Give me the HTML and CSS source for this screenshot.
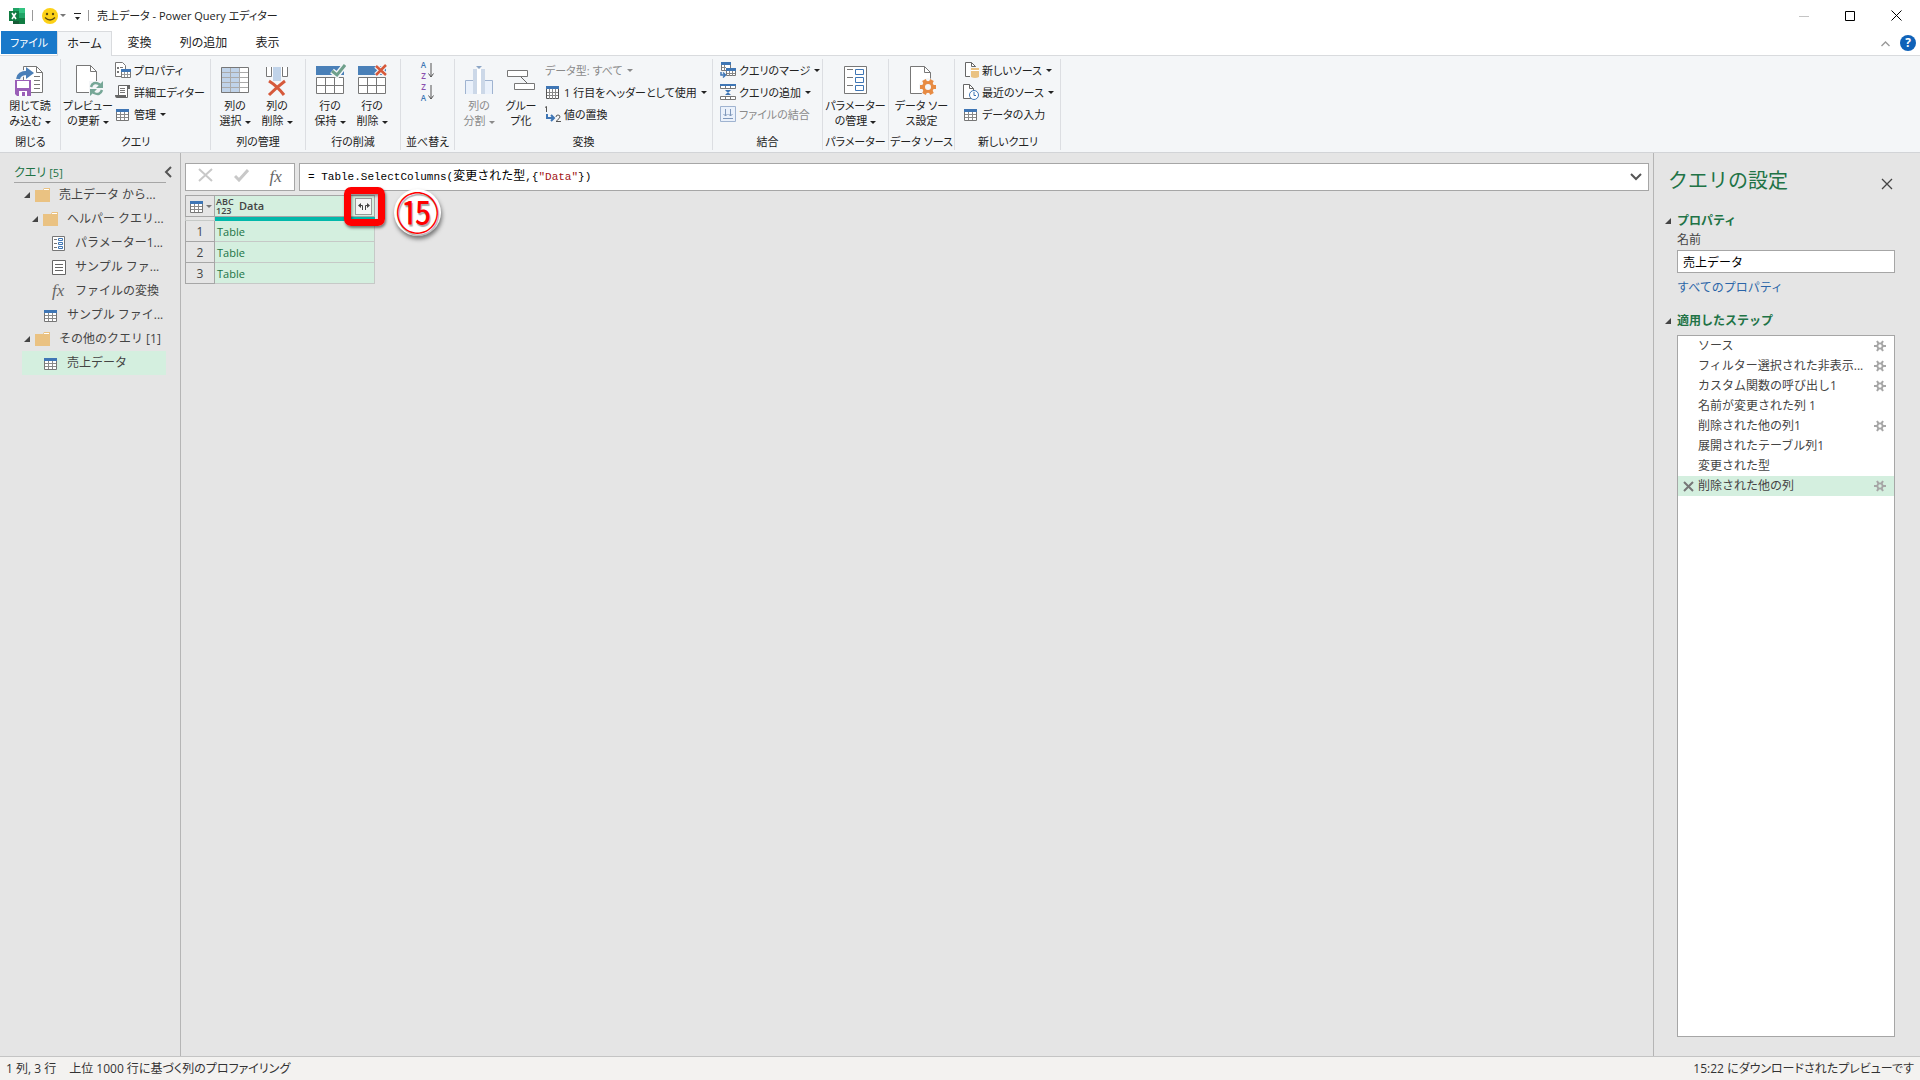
FILE: index.html
```
<!DOCTYPE html>
<html lang="ja">
<head>
    <meta charset="UTF-8">
    <meta name="viewport" content="width=device-width, initial-scale=1.0">
    <title>売上データ - Power Query エディター</title>
    <link rel="stylesheet" href="styles.css">
</head>
<body>
    <!-- shared icons -->
    <svg class="defs" aria-hidden="true">
        <symbol id="i-table" viewBox="0 0 14 13">
            <path fill="#fff" stroke="#767676" d="M.5 3.5h12v9H.5z"/>
            <path fill="none" stroke="#8a8a8a" d="M1 6.5h11M1 9.5h11M4.5 4v8M8.5 4v8"/>
            <path fill="#3f76b5" d="M0 1h13v3H0z"/>
        </symbol>
        <symbol id="i-folder" viewBox="0 0 16 14">
            <path fill="#eac282" d="M0 2h8l1-2h6v2h0v12H0z"/>
            <path fill="#fff" d="M9 1h5v1H9z"/>
        </symbol>
        <symbol id="i-param" viewBox="0 0 14 15">
            <path fill="#fff" stroke="#767676" d="M.5.5h12v14H.5z"/>
            <path fill="none" stroke="#767676" d="M2 3.5h3M2 7.5h3M2 11.5h3"/>
            <path fill="#fff" stroke="#3f76b5" d="M6.5 2.5h4v2h-4zM6.5 6.5h4v2h-4zM6.5 10.5h4v2h-4z"/>
        </symbol>
        <symbol id="i-list" viewBox="0 0 14 15">
            <path fill="#fff" stroke="#666" d="M.5.5h13v14H.5z"/>
            <path fill="none" stroke="#666" d="M3 4.5h8M3 7.5h8M3 10.5h8"/>
        </symbol>
        <symbol id="i-open" viewBox="0 0 6 6"><path fill="#444" d="M6 0v6H0z"/></symbol>
        <symbol id="i-x" viewBox="0 0 12 12"><path fill="none" stroke="currentColor" stroke-width="1.3" d="M1 1l10 10M11 1L1 11"/></symbol>
        <symbol id="i-gear" viewBox="0 0 12 12">
            <circle cx="6" cy="6" r="2.6" fill="none" stroke="#a6a6a6" stroke-width="1.8"/>
            <path fill="none" stroke="#a6a6a6" stroke-width="2" d="M0 6h3M9 6h3M3 1l1.5 2.6M9 1L7.5 3.6M3 11l1.5-2.6M9 11L7.5 8.4"/>
        </symbol>
    </svg>

    <header class="titlebar">
        <svg class="excel" width="16" height="16" viewBox="0 0 16 16">
            <path fill="#185c37" d="M4 0h12v16H4z"/>
            <path fill="#21a366" d="M4 0h6v5H4z"/><path fill="#33c481" d="M10 0h6v5h-6z"/>
            <path fill="#107c41" d="M4 5h6v5H4zM10 10h6v6h-6z"/><path fill="#21a366" d="M10 5h6v5h-6z"/>
            <path fill="#107c41" d="M0 3h10v10H0z"/>
            <path fill="none" stroke="#fff" stroke-width="1.6" d="M3 5l4 6M7 5l-4 6"/>
        </svg>
        <span class="bar"></span>
        <svg class="smile" width="16" height="16" viewBox="0 0 16 16">
            <circle cx="8" cy="8" r="8" fill="#fcd116"/>
            <circle cx="5" cy="6" r="1.2" fill="#5a4a12"/><circle cx="11" cy="6" r="1.2" fill="#5a4a12"/>
            <path fill="none" stroke="#5a4a12" stroke-width="1.3" d="M3 9.5q5 5 10 0"/>
        </svg>
        <span class="caret gray"></span>
        <svg class="qat" width="7" height="8" viewBox="0 0 7 8"><path fill="#222" d="M0 0h7v1H0zM1 4h5L3.500 7z"/></svg>
        <span class="bar"></span>
        <h1 class="title">売上データ - Power Query エディター</h1>
        <div class="window-buttons">
            <button aria-label="最小化"><svg width="10" height="10"><path stroke="#c4c4c4" d="M0 5.500h10"/></svg></button>
            <button aria-label="最大化"><svg width="10" height="10"><path fill="none" stroke="#000" d="M.5.5h9v9h-9z"/></svg></button>
            <button aria-label="閉じる"><svg width="11" height="11"><path fill="none" stroke="#000" d="M.5.5l10 10M10.500.5l-10 10"/></svg></button>
        </div>
    </header>

    <nav class="tabs">
        <button class="tab file">ファイル</button>
        <button class="tab active">ホーム</button>
        <button class="tab">変換</button>
        <button class="tab wide">列の追加</button>
        <button class="tab">表示</button>
        <div class="tabs-right">
            <button aria-label="リボンを折りたたむ"><svg width="9" height="6"><path fill="none" stroke="#999" stroke-width="1.400" d="M.5 5l4-4 4 4"/></svg></button>
            <button class="help" aria-label="ヘルプ">?</button>
        </div>
    </nav>

    <section class="ribbon">
        <div class="group g-close">
            <div class="group-body">
                <button class="large">
                    <svg width="32" height="34" viewBox="0 0 32 34">
                        <path fill="#fff" stroke="#777" d="M9.500 3.500h13l6 6v20h-19z"/><path fill="none" stroke="#777" d="M22.500 3.500v6h6M20 13.500h6M20 17.500h6M20 21.500h6M20 25.500h6"/>
                        <path fill="none" stroke="#f4f6f8" stroke-width="6" d="M4 16q1-7 12-6"/>
                        <path fill="none" stroke="#4a7fb8" stroke-width="4" d="M4 16q1-7 12-6"/><path fill="#4a7fb8" d="M12 4l8 6-8 6z"/>
                        <path fill="#9a5fb8" d="M1 17h16v16H3l-2-2z"/><path fill="#fff" d="M3 18h12v7H3zM5 28h8v5H5z"/><path fill="#9a5fb8" d="M8 29h3v4H8z"/>
                    </svg>
                    閉じて読<br>み込む<span class="caret"></span>
                </button>
            </div>
            <div class="group-label">閉じる</div>
        </div>

        <div class="group g-query">
            <div class="group-body">
                <button class="large">
                    <svg width="32" height="34" viewBox="0 0 32 34">
                        <path fill="#fff" stroke="#777" d="M4.500 2.500h14l6 6v21h-20z"/><path fill="none" stroke="#777" d="M18.500 2.500v6h6"/>
                        <path fill="#f4f6f8" d="M17 18h15v15H17z"/>
                        <path fill="none" stroke="#76a797" stroke-width="2.500" d="M19 24q2-6 8-3l2 2M30 27q-2 6-8 3l-2-2"/>
                        <path fill="#76a797" d="M31 18v7h-7zM18 33v-7h7z"/>
                    </svg>
                    プレビュー<br>の更新<span class="caret"></span>
                </button>
                <div class="stack">
                    <button class="small">
                        <svg width="16" height="16" viewBox="0 0 16 16"><path fill="#fff" stroke="#777" d="M.5.5h7l3 3v11H.5z"/><path fill="#777" d="M2 5h2v2H2zM2 9h2v2H2zM5 5h3v1H5z"/><path fill="#fff" stroke="#777" d="M6.500 7.500h9v8h-9z"/><path stroke="#999" d="M7 12.500h8M9.500 10v5M12.500 10v5"/><path fill="#3f76b5" d="M6 7h10v3H6z"/></svg>
                        プロパティ
                    </button>
                    <button class="small">
                        <svg width="16" height="16" viewBox="0 0 16 16"><path fill="#fff" stroke="#666" d="M3.500 12V1.500h11v3h-2v9h-9"/><path fill="#666" d="M12 1h3v4h-3zM0 11h11v3H2q-2 0-2-3z"/><path stroke="#777" d="M5 4.500h5M5 6.500h5M5 8.500h5"/></svg>
                        詳細エディター
                    </button>
                    <button class="small"><svg class="table-icon"><use href="#i-table"/></svg>管理<span class="caret"></span></button>
                </div>
            </div>
            <div class="group-label">クエリ</div>
        </div>

        <div class="group g-cols">
            <div class="group-body">
                <button class="large">
                    <svg width="32" height="34" viewBox="0 0 32 34">
                        <path fill="#fff" d="M2 4h28v26H2z"/><path fill="#c0d3e9" d="M2 4h19v26H2z"/>
                        <path fill="none" stroke="#aaa" d="M2 9.500h28M2 14.500h28M2 19.500h28M2 24.500h28M11.500 4v26M20.500 4v26"/><path fill="none" stroke="#777" d="M2.500 4.500h27v25h-27z"/>
                    </svg>
                    列の<br>選択<span class="caret"></span>
                </button>
                <button class="large">
                    <svg width="32" height="34" viewBox="0 0 32 34">
                        <path fill="#fff" d="M5 4h22v9H5z"/><path fill="none" stroke="#777" d="M5.500 4v9.500h5V4M26.500 4v9.500h-5V4"/>
                        <path fill="#c0d3e9" d="M12 4h8v14h-8z"/><path fill="none" stroke="#d6593b" stroke-width="3" d="M8 18q8 5 15 14M24 18q-8 6-16 14"/>
                    </svg>
                    列の<br>削除<span class="caret"></span>
                </button>
            </div>
            <div class="group-label">列の管理</div>
        </div>

        <div class="group g-cols">
            <div class="group-body">
                <button class="large">
                    <svg width="32" height="34" viewBox="0 0 32 34">
                        <path fill="#4a80b8" d="M2 3h28v9H2z"/><path fill="#fff" stroke="#777" d="M2.500 14.500h27v16h-27z"/><path stroke="#777" d="M2 22.500h28M11.500 14v17M20.500 14v17"/>
                        <path fill="none" stroke="#f4f6f8" stroke-width="6" d="M18 8l5 4 8-10"/><path fill="none" stroke="#6fa08c" stroke-width="3" d="M18 8l5 4 8-10"/>
                    </svg>
                    行の<br>保持<span class="caret"></span>
                </button>
                <button class="large">
                    <svg width="32" height="34" viewBox="0 0 32 34">
                        <path fill="#4a80b8" d="M2 3h28v9H2z"/><path fill="#fff" stroke="#777" d="M2.500 14.500h27v16h-27z"/><path stroke="#777" d="M2 22.500h28M11.500 14v17M20.500 14v17"/>
                        <path fill="none" stroke="#f4f6f8" stroke-width="5" d="M20 3l10 9M30 2L20 12"/><path fill="none" stroke="#d6593b" stroke-width="2.500" d="M20 3l10 9M30 2L20 12"/>
                    </svg>
                    行の<br>削除<span class="caret"></span>
                </button>
            </div>
            <div class="group-label">行の削減</div>
        </div>

        <div class="group g-sort">
            <div class="group-body">
                <button class="sort" aria-label="昇順で並べ替え">
                    <span class="az"><b>A</b><i>Z</i></span>
                    <svg width="6" height="15"><path fill="none" stroke="#555" d="M3 0v14M.5 10.500L3 14l2.500-3.500"/></svg>
                </button>
                <button class="sort" aria-label="降順で並べ替え">
                    <span class="az"><i>Z</i><b>A</b></span>
                    <svg width="6" height="15"><path fill="none" stroke="#555" d="M3 0v14M.5 10.500L3 14l2.500-3.500"/></svg>
                </button>
            </div>
            <div class="group-label">並べ替え</div>
        </div>

        <div class="group g-transform">
            <div class="group-body">
                <button class="large" disabled>
                    <svg width="32" height="34" viewBox="0 0 32 34">
                        <path fill="#eaf1fb" stroke="#9fb3d0" d="M2.500 31V17.500h8V31M29.500 31V17.500h-8V31"/><path fill="#ccd8e8" d="M10 6h4v25h-4zM18 6h4v25h-4z"/><path fill="#fff" d="M14 6h4v25h-4z"/><path fill="#8da6c6" d="M13 3h6l-3 3z"/>
                    </svg>
                    列の<br>分割<span class="caret"></span>
                </button>
                <button class="large">
                    <svg width="32" height="34" viewBox="0 0 32 34">
                        <path stroke="#666" d="M16 14l7 7"/><path fill="#fff" stroke="#777" d="M2.500 7.500h20v6h-20zM9.500 20.500h20v6h-20z"/>
                    </svg>
                    グルー<br>プ化
                </button>
                <div class="stack">
                    <button class="small" disabled>データ型: すべて<span class="caret"></span></button>
                    <button class="small">
                        <svg class="table-icon" viewBox="0 0 14 13"><path fill="#fff" stroke="#555" d="M.5.5h12v12H.5z"/><path stroke="#888" d="M1 6.500h11M1 9.500h11M3.500 3v10M6.500 3v10M9.500 3v10"/><path fill="#3f76b5" d="M0 0h13v3H0z"/></svg>
                        1 行目をヘッダーとして使用<span class="caret"></span>
                    </button>
                    <button class="small">
                        <svg width="16" height="16" viewBox="0 0 16 16"><path fill="none" stroke="#555" d="M0 1.500l1.500-1V6M11 11q0-2 2-2t2 2q0 1-4 4.500h5"/><path fill="none" stroke="#3f76b5" stroke-width="2" d="M2 8v4h6M6 9l3 3-3 3"/></svg>
                        値の置換
                    </button>
                </div>
            </div>
            <div class="group-label">変換</div>
        </div>

        <div class="group g-combine">
            <div class="group-body">
                <div class="stack">
                    <button class="small">
                        <svg width="16" height="16" viewBox="0 0 16 16"><path fill="#fff" stroke="#777" d="M1.500 1.500h9v7h-9zM6.500 6.500h9v7h-9z"/><path stroke="#888" d="M7 11.500h8M9.500 9v5M12.500 9v5M2 5.500h4M4.500 3v5"/><path fill="#3f76b5" d="M1 0h10v3H1zM6 6h10v3H6z"/><path fill="none" stroke="#3f76b5" stroke-width="1.500" d="M1 10v3h4M3 10.500L5.500 13 3 15.500"/></svg>
                        クエリのマージ<span class="caret"></span>
                    </button>
                    <button class="small">
                        <svg width="16" height="16" viewBox="0 0 16 16"><path fill="#fff" stroke="#777" d="M.5 1.500h15v3H.5zM.5 12.500h15v3H.5z"/><path stroke="#777" d="M5.500 2v3M10.500 2v3M5.500 12v4M10.500 12v4"/><path fill="#3f76b5" d="M0 0h16v2H0zM5 6h6L8 9zM5 11h6L8 8z"/></svg>
                        クエリの追加<span class="caret"></span>
                    </button>
                    <button class="small" disabled>
                        <svg width="16" height="16" viewBox="0 0 16 16"><path fill="#eaf1fb" stroke="#9fb3d0" d="M.5.5h15v15H.5z"/><path fill="none" stroke="#7f98bb" d="M5.500 3v7M3.500 8l2 2 2-2M10.500 3v7M8.500 8l2 2 2-2M3 12.500h10"/></svg>
                        ファイルの結合
                    </button>
                </div>
            </div>
            <div class="group-label">結合</div>
        </div>

        <div class="group g-single">
            <div class="group-body">
                <button class="large">
                    <svg width="32" height="34" viewBox="0 0 32 34">
                        <path fill="#fff" stroke="#777" d="M4.500 3.500h22v27h-22z"/><path stroke="#777" d="M7 6.500h6M7 14.500h6M7 22.500h6"/>
                        <path fill="#fff" stroke="#3f76b5" d="M15.500 6.500h8v5h-8zM15.500 14.500h8v5h-8zM15.500 22.500h8v5h-8z"/>
                    </svg>
                    パラメーター<br>の管理<span class="caret"></span>
                </button>
            </div>
            <div class="group-label">パラメーター</div>
        </div>

        <div class="group g-single">
            <div class="group-body">
                <button class="large">
                    <svg width="32" height="34" viewBox="0 0 32 34">
                        <path fill="#fff" stroke="#777" d="M4.500 3.500h14l6 6v21h-20z"/><path fill="none" stroke="#777" d="M18.500 3.500v6h6"/>
                        <circle cx="22" cy="24" r="9" fill="#f4f6f8"/><circle cx="22" cy="24" r="4.500" fill="none" stroke="#e78b43" stroke-width="3"/>
                        <path stroke="#e78b43" stroke-width="4" d="M14 24h3M27 24h3M18 17l1.500 3M26 17l-1.500 3M18 31l1.500-3M26 31l-1.500-3"/>
                    </svg>
                    データ ソー<br>ス設定
                </button>
            </div>
            <div class="group-label">データ ソース</div>
        </div>

        <div class="group g-new">
            <div class="group-body">
                <div class="stack">
                    <button class="small">
                        <svg width="16" height="16" viewBox="0 0 16 16"><path fill="#fff" stroke="#666" d="M2.500.5h6l4 4v10h-10z"/><path fill="none" stroke="#666" d="M8.500.5v4h4"/><path fill="#f4f6f8" d="M7 5h9v11H7z"/><path fill="#eac282" d="M8 6h8v9q-4 2-8 0z"/><path stroke="#fff" d="M8 8.500h8"/></svg>
                        新しいソース<span class="caret"></span>
                    </button>
                    <button class="small">
                        <svg width="16" height="16" viewBox="0 0 16 16"><path fill="#fff" stroke="#666" d="M.5.5h6l4 4v10H.5z"/><path fill="none" stroke="#666" d="M6.500.5v4h4"/><circle cx="11" cy="11" r="4.500" fill="#fff" stroke="#3f76b5"/><path fill="none" stroke="#3f76b5" d="M11 8v3.500h2"/></svg>
                        最近のソース<span class="caret"></span>
                    </button>
                    <button class="small"><svg class="table-icon"><use href="#i-table"/></svg>データの入力</button>
                </div>
            </div>
            <div class="group-label">新しいクエリ</div>
        </div>
    </section>

    <main class="workspace">
        <aside class="queries">
            <div class="queries-head">
                <h2>クエリ <span>[5]</span></h2>
                <button aria-label="折りたたむ"><svg width="8" height="12"><path fill="none" stroke="#555" stroke-width="2" d="M7 1L2 6l5 5"/></svg></button>
            </div>
            <ul class="tree">
                <li class="folder"><svg class="tri"><use href="#i-open"/></svg><svg class="ficon"><use href="#i-folder"/></svg>売上データ から...</li>
                <li class="folder level2"><svg class="tri"><use href="#i-open"/></svg><svg class="ficon"><use href="#i-folder"/></svg>ヘルパー クエリ...</li>
                <li class="level3"><svg class="qicon"><use href="#i-param"/></svg>パラメーター1...</li>
                <li class="level3"><svg class="qicon"><use href="#i-list"/></svg>サンプル ファ...</li>
                <li class="level3"><span class="fx">fx</span>ファイルの変換</li>
                <li><svg class="qicon"><use href="#i-table"/></svg>サンプル ファイ...</li>
                <li class="folder"><svg class="tri"><use href="#i-open"/></svg><svg class="ficon"><use href="#i-folder"/></svg>その他のクエリ [1]</li>
                <li class="selected"><svg class="qicon"><use href="#i-table"/></svg>売上データ</li>
            </ul>
        </aside>

        <section class="preview">
            <div class="formula-row">
                <div class="formula-buttons">
                    <button aria-label="キャンセル"><svg width="15" height="14"><path fill="none" stroke="#c8c8c8" stroke-width="2" d="M1 1l13 12M14 1L1 13"/></svg></button>
                    <button aria-label="入力"><svg width="15" height="13"><path fill="none" stroke="#c8c8c8" stroke-width="3" d="M1 7l4 4 9-10"/></svg></button>
                    <button class="fx" aria-label="ステップの追加">fx</button>
                </div>
                <div class="formula">
                    <div class="formula-text" role="textbox" contenteditable="true" spellcheck="false" aria-label="数式">= Table.SelectColumns(<span class="ident">変更された型</span>,{<span class="string">"Data"</span>})</div>
                    <button aria-label="展開"><svg width="12" height="8"><path fill="none" stroke="#555" stroke-width="2" d="M1 1l5 5 5-5"/></svg></button>
                </div>
            </div>

            <table class="grid">
                <thead>
                    <tr>
                        <th class="corner"><button aria-label="テーブル"><svg class="table-icon"><use href="#i-table"/></svg><span class="caret gray"></span></button></th>
                        <th class="column">
                            <div class="column-head">
                                <span class="any">ABC<br>123</span>Data
                                <button class="expand" aria-label="展開">
                                    <svg width="12" height="8" viewBox="0 0 12 8"><path fill="none" stroke="#444" d="M1 3.500h3.500V8M11 3.500H7.500V8"/><path fill="#444" d="M3 1v5L0 3.500zM9 1v5l3-2.500z"/></svg>
                                </button>
                                <span class="marker"></span>
                                <span class="badge">⑮</span>
                            </div>
                        </th>
                    </tr>
                    <tr class="quality"><td></td><td class="bar-cell"></td></tr>
                </thead>
                <tbody>
                    <tr><th>1</th><td><a href="#">Table</a></td></tr>
                    <tr><th>2</th><td><a href="#">Table</a></td></tr>
                    <tr><th>3</th><td><a href="#">Table</a></td></tr>
                </tbody>
            </table>
        </section>

        <aside class="settings">
            <div class="settings-head">
                <h2>クエリの設定</h2>
                <button aria-label="閉じる"><svg width="12" height="12"><use href="#i-x"/></svg></button>
            </div>
            <h3><svg class="tri"><use href="#i-open"/></svg>プロパティ</h3>
            <div class="props">
                <label for="query-name">名前</label>
                <input id="query-name" type="text" value="売上データ">
                <a href="#">すべてのプロパティ</a>
            </div>
            <h3><svg class="tri"><use href="#i-open"/></svg>適用したステップ</h3>
            <ul class="steps">
                <li><span>ソース</span><svg class="gear"><use href="#i-gear"/></svg></li>
                <li><span>フィルター選択された非表示...</span><svg class="gear"><use href="#i-gear"/></svg></li>
                <li><span>カスタム関数の呼び出し1</span><svg class="gear"><use href="#i-gear"/></svg></li>
                <li><span>名前が変更された列 1</span></li>
                <li><span>削除された他の列1</span><svg class="gear"><use href="#i-gear"/></svg></li>
                <li><span>展開されたテーブル列1</span></li>
                <li><span>変更された型</span></li>
                <li class="selected"><svg class="remove" viewBox="0 0 11 11"><path stroke="#777" stroke-width="2" d="M1 1l9 9M10 1l-9 9"/></svg><span>削除された他の列</span><svg class="gear"><use href="#i-gear"/></svg></li>
            </ul>
        </aside>
    </main>

    <footer class="status">
        <span>1 列, 3 行</span>
        <span>上位 1000 行に基づく列のプロファイリング</span>
        <span class="right">15:22 にダウンロードされたプレビューです</span>
    </footer>
</body>
</html>
```
FILE: styles.css
```
* {
    box-sizing: border-box;
}

body {
    margin: 0;
    min-height: 100vh;
    display: flex;
    flex-direction: column;
    background: #fff;
    color: #222;
    font-family: "Open Sans", "Noto Sans CJK JP", sans-serif;
    font-size: 12px;
    line-height: 16px;
}

button {
    margin: 0;
    padding: 0;
    border: 0;
    background: none;
    color: inherit;
    font: inherit;
}

svg {
    flex: none;
}

h1, h2, h3, ul {
    margin: 0;
    padding: 0;
    font-weight: normal;
    list-style: none;
}

.defs {
    display: none;
}

.caret {
    display: inline-block;
    margin-left: 4px;
    vertical-align: middle;
    border: 3px solid transparent;
    border-top-color: currentColor;
    border-bottom: 0;
}

.caret.gray {
    color: #777;
    margin-left: 2px;
}

.table-icon {
    width: 14px;
    height: 13px;
}

/* title bar */
.titlebar {
    display: flex;
    align-items: center;
    height: 31px;
    padding-left: 9px;
}

.titlebar .bar {
    width: 1px;
    height: 11px;
    margin: 0 8px 0 7px;
    background: #999;
}

.titlebar .smile {
    margin-left: 1px;
}

.titlebar .qat {
    margin: 3px 0 0 8px;
}

.title {
    font-size: 11px;
    font-feature-settings: "palt";
}

.window-buttons {
    display: flex;
    margin-left: auto;
    padding-right: 1px;
}

.window-buttons button {
    display: flex;
    align-items: center;
    justify-content: center;
    width: 46px;
    height: 30px;
}

/* tabs */
.tabs {
    display: flex;
    height: 25px;
    padding-left: 1px;
    border-bottom: 1px solid #d9dbde;
    font-feature-settings: "palt";
}

.tab {
    width: 55px;
    height: 24px;
}

.tab.file {
    width: 56px;
    height: 23px;
    background: #1979ca;
    color: #fff;
    font-size: 11px;
}

.tab.active {
    height: 25px;
    border: 1px solid #d9dbde;
    border-bottom: 0;
    background: #f4f6f8;
}

.tab.wide {
    width: 73px;
}

.tabs-right {
    display: flex;
    align-items: center;
    gap: 10px;
    margin-left: auto;
    padding-right: 4px;
}

.help {
    width: 16px;
    height: 16px;
    border-radius: 50%;
    background: #0f62b8;
    color: #fff;
    font-weight: bold;
}

/* ribbon */
.ribbon {
    display: flex;
    padding: 3px 0 2px 1px;
    background: #f4f6f8;
    border-bottom: 1px solid #d2d4d7;
    font-size: 11px;
    line-height: 15px;
    font-feature-settings: "palt";
}

.group {
    display: flex;
    flex-direction: column;
    border-right: 1px solid #dcdee2;
    white-space: nowrap;
}

.group-body {
    display: flex;
    height: 75px;
}

.group-label {
    text-align: center;
    line-height: 16px;
}

.g-close { width: 60px; }
.g-query { width: 150px; }
.g-cols { width: 95px; padding-left: 3px; }
.g-sort { width: 54px; }
.g-transform { width: 258px; padding-left: 3px; }
.g-combine { width: 110px; padding-left: 7px; }
.g-single { width: 66px; }
.g-new { width: 106px; padding-left: 8px; }

.large {
    width: 42px;
    align-self: flex-start;
}

.large svg {
    display: block;
    margin: 4px auto 1px;
}

.large .caret {
    margin-left: 3px;
}

.g-close .large { width: 58px; }
.g-query .large { width: 54px; }
.g-single .large { width: 65px; }

.g-cols .group-label,
.g-transform .group-label {
    padding-right: 3px;
}

.g-combine .group-label,
.g-new .group-label {
    padding-right: 7px;
}

button:disabled {
    color: #8a8a8a;
}

.stack {
    display: flex;
    flex-direction: column;
}

.small {
    display: flex;
    align-items: center;
    gap: 3px;
    height: 22px;
}

.small .table-icon {
    margin: 0 1px;
}

.small .caret {
    margin-left: 1px;
}

.g-transform .stack {
    padding-left: 3px;
}

.g-sort .group-body {
    flex-direction: column;
    align-items: center;
}

.sort {
    display: flex;
    align-items: center;
    gap: 2px;
    height: 22px;
}

.az {
    font-size: 8px;
    line-height: 11px;
}

.az b, .az i {
    display: block;
    font-weight: 600;
    font-style: normal;
    color: #3f76b5;
}

.az i {
    color: #8a4fae;
}

/* workspace */
.workspace {
    flex: 1;
    display: flex;
    background: #e5e5e5;
}

.queries {
    width: 181px;
    border-right: 1px solid #b5b5b5;
    padding: 12px 0 0 14px;
    color: #444;
}

.queries-head {
    display: flex;
    align-items: center;
    justify-content: space-between;
    width: 158px;
}

.queries-head h2 {
    width: 152px;
    height: 18px;
    border-bottom: 1px solid #a6a6a6;
    color: #217346;
    font-size: 12px;
    font-feature-settings: "palt";
}

.queries-head span {
    font-size: 11px;
}

.queries-head button {
    margin-left: -2px;
}

.tree {
    padding-left: 8px;
    white-space: nowrap;
}

.tree li {
    display: flex;
    align-items: center;
    width: 144px;
    height: 24px;
    padding-left: 22px;
}

.tree .folder {
    padding-left: 2px;
}

.tree .level2 {
    padding-left: 10px;
}

.tree .level3 {
    padding-left: 30px;
}

.tree .selected {
    background: #d4efdf;
}

.tri {
    width: 6px;
    height: 6px;
    margin-right: 5px;
}

.ficon {
    width: 16px;
    height: 14px;
    margin-right: 8px;
}

.qicon {
    width: 14px;
    height: 15px;
    margin-right: 9px;
}

.fx {
    font-family: "Liberation Serif", serif;
    font-style: italic;
    font-size: 17px;
    color: #666;
}

.tree .fx {
    width: 14px;
    margin-right: 9px;
}

.preview {
    flex: 1;
    min-width: 0;
    padding: 10px 4px;
}

.formula-row {
    display: flex;
    gap: 4px;
}

.formula-buttons, .formula {
    display: flex;
    align-items: center;
    height: 28px;
    border: 1px solid #a6a6a6;
    background: #fff;
}

.formula-buttons {
    justify-content: space-around;
    width: 110px;
    padding: 0 2px;
}

.formula {
    flex: 1;
    justify-content: space-between;
    padding: 0 6px 0 8px;
}

.formula-text {
    color: #000;
    font-family: "Liberation Mono", "Noto Sans CJK JP", monospace;
    font-size: 11px;
    outline: none;
}

.ident {
    font-size: 12px;
}

.string {
    color: #a31515;
}

/* data grid */
.grid {
    width: 190px;
    margin-top: 4px;
    border-collapse: collapse;
    table-layout: fixed;
    color: #444;
}

.grid th, .grid td {
    height: 21px;
    padding: 1px 4px 0;
    border: 1px solid #a6a6a6;
    font-weight: normal;
}

.grid td {
    padding-left: 2px;
    border-color: #c6c9c7;
    background: #d4efdf;
}

.grid a {
    color: #217346;
    font-size: 11px;
    text-decoration: none;
}

.grid .corner {
    width: 29px;
}

.corner button {
    display: flex;
    align-items: center;
}

.grid .column {
    padding: 0 2px 0 1px;
    background: #d4efdf;
}

.column-head {
    position: relative;
    display: flex;
    align-items: center;
    font-size: 11px;
    font-weight: 600;
}

.any {
    width: 18px;
    margin-right: 5px;
    font-size: 9px;
    line-height: 9px;
    text-align: left;
}

.expand {
    display: flex;
    align-items: center;
    justify-content: center;
    width: 17px;
    height: 17px;
    margin-left: auto;
    border: 1px solid #999;
    background: #f5f5f5;
}

.grid .quality td {
    height: 4px;
    padding: 0;
    background: #e5e5e5;
}

.grid .quality .bar-cell {
    border-color: #01b8aa;
    background: #01b8aa;
}

/* callout over the expand button */
.marker {
    position: absolute;
    top: -10px;
    right: -13px;
    width: 41px;
    height: 39px;
    border: 7px solid #f00;
    border-radius: 7px;
    box-shadow: 1px 2px 3px rgba(0, 0, 0, 0.5), inset 1px 2px 3px rgba(0, 0, 0, 0.4);
}

.badge {
    position: absolute;
    top: -8px;
    left: 178px;
    width: 47px;
    height: 47px;
    border-radius: 50%;
    background: #fff;
    box-shadow: 1px 3px 4px rgba(0, 0, 0, 0.5);
    color: #f00;
    font-family: "Noto Sans CJK JP", sans-serif;
    font-size: 44px;
    font-weight: 400;
    line-height: 45px;
    text-align: center;
    text-shadow: 1px 2px 1px #aaa;
}

/* settings pane */
.settings {
    display: flex;
    flex-direction: column;
    width: 267px;
    padding: 14px 25px 19px 11px;
    border-left: 1px solid #b5b5b5;
    color: #444;
}

.settings-head {
    display: flex;
    align-items: flex-end;
    justify-content: space-between;
    margin-bottom: 16px;
    padding: 0 2px 0 3px;
}

.settings-head h2 {
    color: #217346;
    font-size: 20px;
    line-height: 27px;
}

.settings h3 {
    display: flex;
    align-items: center;
    height: 22px;
    color: #217346;
    font-size: 12px;
    font-weight: bold;
}

.settings .tri {
    margin-right: 6px;
}

.props {
    display: flex;
    flex-direction: column;
    align-items: flex-start;
    margin-bottom: 14px;
    padding-left: 12px;
}

.props input {
    width: 100%;
    height: 23px;
    margin: 2px 0 7px;
    padding: 0 5px;
    border: 1px solid #a6a6a6;
    background: #fff;
    font: inherit;
}

.props a {
    color: #2b65a8;
    text-decoration: none;
}

.steps {
    flex: 1;
    margin: 3px 0 0 12px;
    border: 1px solid #a6a6a6;
    background: #fff;
}

.steps li {
    display: flex;
    align-items: center;
    height: 20px;
    padding: 0 8px 0 20px;
}

.steps .selected {
    padding-left: 5px;
    background: #d4efdf;
}

.remove {
    width: 11px;
    height: 11px;
    margin-right: 4px;
}

.gear {
    width: 12px;
    height: 12px;
    margin-left: auto;
}

.status {
    display: flex;
    gap: 13px;
    height: 24px;
    padding: 4px 6px;
    border-top: 1px solid #c4c4c4;
    background: #f3f2f0;
    color: #333;
    font-feature-settings: "palt";
}

.status .right {
    margin-left: auto;
}
```
